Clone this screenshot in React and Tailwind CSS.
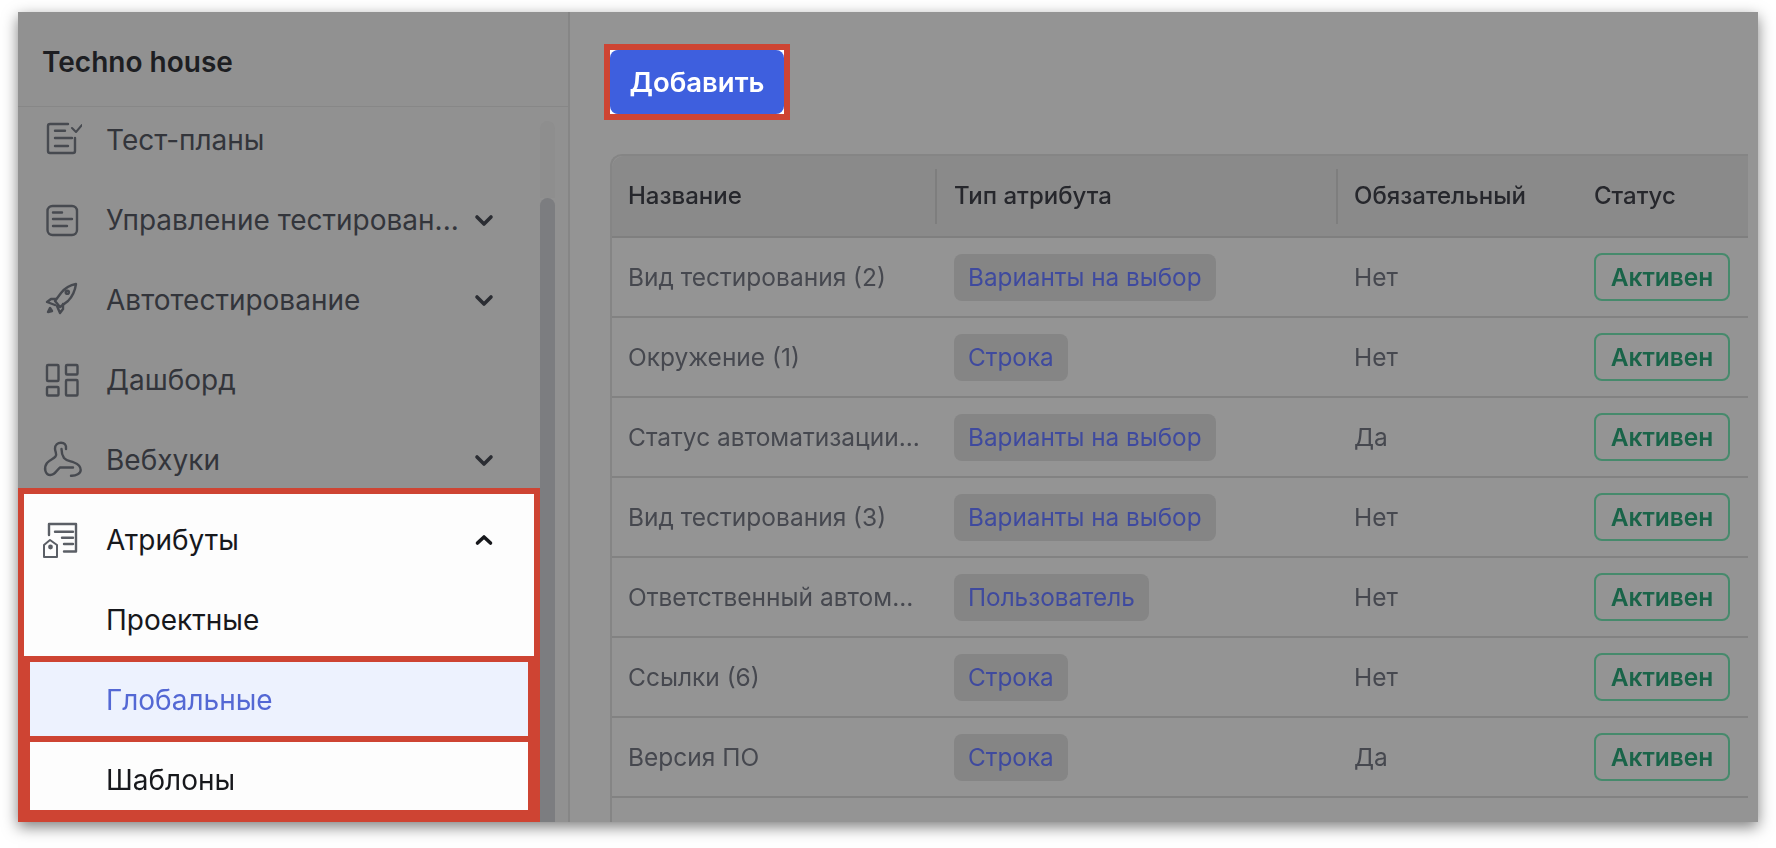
const Svg = ({ children, color = "#474a50" }) => (
  <svg width="40" height="40" viewBox="0 0 40 40" fill="none" stroke={color} strokeWidth="2.4" strokeLinecap="round" strokeLinejoin="round" className="shrink-0">
    {children}
  </svg>
);
const PlanIcon = () => (<Svg>
  <path d="M26 4H8a2 2 0 0 0-2 2v25a2 2 0 0 0 2 2h23a2 2 0 0 0 2-2V18" />
  <path d="M13 10.7h10M13 18h17M13 26h13" />
  <path d="M30 8l4 4 6-7" strokeWidth="2" />
</Svg>);
const DocIcon = () => (<Svg>
  <rect x="5.5" y="6" width="29.5" height="29" rx="5" />
  <path d="M11 12.5h9M11 19h19M11 26h14" />
</Svg>);
const RocketIcon = () => (<Svg>
  <path d="M34 4C28 5 23 8 19 13l-6 8 5 6 8-6c4-4 7-10 8-17z" />
  <circle cx="25.3" cy="12.3" r="1.6" />
  <path d="M14 19H9l-4 3 8 3M21 24v5l-3 4-3-7" />
  <path d="M8 28l-2 4 4-1z" fill="#474a50" />
</Svg>);
const DashIcon = () => (<Svg>
  <rect x="5" y="5" width="11.5" height="16" rx="1" />
  <rect x="24" y="5" width="11.5" height="9.5" rx="1" />
  <rect x="5" y="27" width="11.5" height="8.5" rx="1" />
  <rect x="24" y="20" width="11.5" height="15.5" rx="1" />
</Svg>);
const HookIcon = () => (<Svg>
  <path d="M24 9C24.500 5 22.500 2.700 19 2.700 15.500 2.700 13 5 13 8.500 13 12 15.500 14 13.500 16.500 11.500 19 8 19.500 5 23 1.500 27.500 3 35 8.500 35 13.500 35 14.500 30 18 27.500H31" />
  <path d="M19.500 9C19.500 13 20 15 22 18 24.500 21 28 21 32 22.500 36 24 38.700 26 38.700 30 38.700 33.500 34 36 29 35.700" />
</Svg>);
const AttrIcon = () => (<Svg color="#5b5f66">
  <path d="M7 15V4h27v27.500H22" />
  <path d="M13 11.700h18M20 17.700h11M22 24h9" />
  <path d="M2 25l6-5 7 5v12H2z" strokeWidth="2" />
  <circle cx="8.500" cy="27" r="1.200" />
</Svg>);
const Chevron = ({ up, color = "#2b2d33" }) => (
  <svg width="20" height="14" viewBox="0 0 20 14" fill="none" stroke={color} strokeWidth="3.6" strokeLinecap="round" strokeLinejoin="round" className="shrink-0">
    <path d={up ? "M3.500 10L10 4l6.500 6" : "M3 4l7 7 7-7"} />
  </svg>
);

const NavRow = ({ icon, label, chevron, up, dark }) => (
  <div className={`flex h-20 shrink-0 items-center pl-6 ${dark ? "text-[#17181c]" : "text-[#33353b]"}`}>
    <div className="w-[64px]">{icon}</div>
    <span className="w-[368px] whitespace-nowrap">{label}</span>
    {chevron && <Chevron up={up} color={dark ? "#17181c" : "#2b2d33"} />}
  </div>
);

const rows = [
  ["Вид тестирования (2)", "Варианты на выбор", "Нет"],
  ["Окружение (1)", "Строка", "Нет"],
  ["Статус автоматизации...", "Варианты на выбор", "Да"],
  ["Вид тестирования (3)", "Варианты на выбор", "Нет"],
  ["Ответственный автом...", "Пользователь", "Нет"],
  ["Ссылки (6)", "Строка", "Нет"],
  ["Версия ПО", "Строка", "Да"],
];

export default function App() {
  return (
    <div className="h-[848px] w-[1776px] overflow-hidden bg-white pt-3 pl-[18px] font-['Inter','Noto_Sans',sans-serif]">
      <div className="flex h-[810px] w-[1740px] bg-[#949494] shadow-[0_5px_14px_rgba(0,0,0,0.5)] blur-[0.6px]">
        {/* sidebar */}
        <aside className="flex h-full w-[552px] shrink-0 flex-col border-r-2 border-[#868686] bg-[#919191]">
          <div className="flex h-[95px] shrink-0 items-center border-b border-[#878787] pl-6 pt-[6px] text-[28px] font-semibold text-[#1d1e22]">
            Techno house
          </div>
          <div className="flex min-h-0 flex-1">
            <div className="flex w-[522px] shrink-0 flex-col text-[28px]">
              <div className="h-[381px] shrink-0 overflow-hidden">
                <div className="-mt-[7px]">
                  <NavRow icon={<PlanIcon />} label="Тест-планы" />
                  <NavRow icon={<DocIcon />} label="Управление тестирован..." chevron />
                  <NavRow icon={<RocketIcon />} label="Автотестирование" chevron />
                  <NavRow icon={<DashIcon />} label="Дашборд" />
                  <NavRow icon={<HookIcon />} label="Вебхуки" chevron />
                </div>
              </div>
              <div className="h-[334px] shrink-0 border-[6px] border-[#ce4433]">
                <div className="h-[162px] overflow-hidden bg-[#fdfdfd] pt-[6px]">
                  <div className="-ml-[6px]">
                    <NavRow icon={<AttrIcon />} label="Атрибуты" chevron up dark />
                    <div className="flex h-20 items-center pl-[88px] text-[#17181c]">Проектные</div>
                  </div>
                </div>
                <div className="flex h-[86px] items-center border-[6px] border-[#ce4433] bg-[#edf2fe] pl-[76px] pt-[2px] text-[#5468d4]">
                  Глобальные
                </div>
                <div className="flex h-[74px] items-center border-x-[6px] border-b-[6px] border-[#ce4433] bg-[#fdfdfd] pl-[76px] pt-2 text-[#17181c]">
                  Шаблоны
                </div>
              </div>
            </div>
            <div className="flex w-[15px] shrink-0 flex-col pt-[14px]">
              <div className="h-[77px] shrink-0 rounded-t-lg bg-[#8e8e8e]" />
              <div className="flex-1 rounded-t-lg bg-[#7c7d80]" />
            </div>
          </div>
        </aside>

        {/* main */}
        <main className="min-w-0 flex-1 overflow-hidden">
          <div className="pt-8 pl-[34px]">
            <div className="inline-block border-[6px] border-[#ce4433] bg-white">
              <button className="flex h-16 w-[174px] items-center justify-center rounded-lg bg-[#3e5fde] pt-[2px] text-[27.5px] font-semibold text-white">
                Добавить
              </button>
            </div>
          </div>
          <div className="mt-[34px] ml-[40px] w-[1138px] rounded-tl-xl border-t-2 border-l-2 border-[#858585] text-[24.5px]">
            <div className="grid h-[82px] grid-cols-[325px_401px_240px_170px] items-center rounded-tl-xl border-b-2 border-[#7f7f7f] bg-[#8a8a8a] text-[24px] font-medium text-[#26272c]">
              <div className="flex h-[55px] items-center border-r-2 border-[#7e7e7e] pl-[16px]">Название</div>
              <div className="flex h-[55px] items-center border-r-2 border-[#7e7e7e] pl-[17px]">Тип атрибута</div>
              <div className="pl-[16px]">Обязательный</div>
              <div className="pl-[16px]">Статус</div>
            </div>
            {rows.map((r, i) => (
              <div key={i} className="grid h-20 grid-cols-[325px_401px_240px_170px] items-center border-b-2 border-[#828282] text-[#46484f]">
                <div className="pl-[16px] whitespace-nowrap">{r[0]}</div>
                <div className="pl-[17px]">
                  <span className="inline-flex h-[47px] items-center rounded-lg bg-[#858585] px-[14px] text-[24.3px] text-[#3f4a9e]">{r[1]}</span>
                </div>
                <div className="pl-[16px]">{r[2]}</div>
                <div className="pl-[16px]">
                  <span className="inline-flex h-[48px] w-[136px] items-center justify-center rounded-lg border-2 border-[#468a6c] font-semibold text-[#1a6449]">Активен</span>
                </div>
              </div>
            ))}
            <div className="h-[40px]" />
          </div>
        </main>
      </div>
    </div>
  );
}
